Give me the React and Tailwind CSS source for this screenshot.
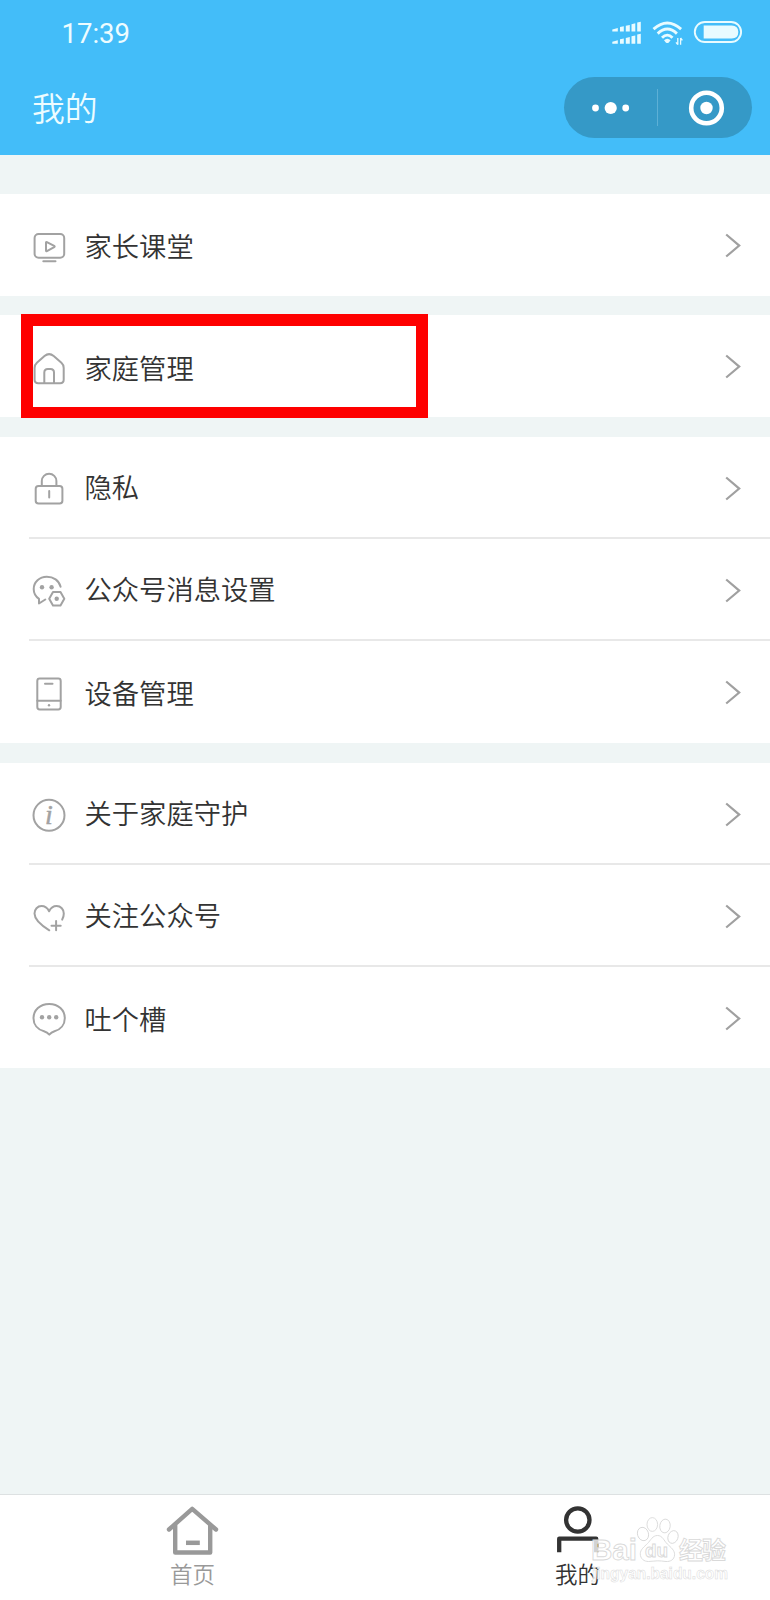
import React from "react";

const icons = {
  video: (
    <>
      <rect x="3.6" y="7" width="29.6" height="23.800" rx="4" />
      <path d="M12.300 34.200H24.500M15 16v7.600q0 1 .9.500l7.300-4q1-.6 0-1.200l-7.300-3.800q-.9-.4-.9.600z" />
    </>
  ),
  house: (
    <>
      <path d="M3.600 20q0-3.200 2.300-5.200L13.500 8q4.600-3.800 9.200 0l7.700 6.800q2.300 2 2.300 5.200V31.800q0 3.400-3.600 3.400H7.200q-3.600 0-3.600-3.400z" />
      <path d="M13.300 35V24.500q0-3.500 3.500-3.500h2.700q3.500 0 3.500 3.500V35" />
    </>
  ),
  lock: (
    <>
      <rect x="4.700" y="16" width="26.700" height="17.500" rx="2.800" />
      <path d="M10.800 16V11a7.300 7.300 0 0 1 14.600 0v5M18.200 21v6.500" />
    </>
  ),
  message: (
    <>
      <path d="M29.600 14.800C28 8.500 22.500 4.700 15.800 4.700 8.500 4.700 2.700 10 2.700 17c0 4.200 2 7.600 5.300 9.900v4.600l6.300-4" />
      <path d="M18.200 26.700l3.800-6.800h7.500l3.800 6.800-3.800 6.800H22z" />
      <g fill="currentColor" stroke="none">
        <circle cx="11" cy="15.200" r="2.200" />
        <circle cx="20.600" cy="15.200" r="2.200" />
        <circle cx="25.700" cy="26.700" r="2.200" />
      </g>
    </>
  ),
  device: (
    <>
      <rect x="6.300" y="4.500" width="23.400" height="31" rx="2.400" />
      <path d="M6.300 26.800h23.400M14 9.700h7.500" />
      <circle cx="18" cy="31.200" r="1.200" fill="currentColor" stroke="none" />
    </>
  ),
  info: (
    <>
      <circle cx="18" cy="19.300" r="15.500" />
      <text x="17.800" y="28" textAnchor="middle" fill="currentColor" stroke="currentColor" strokeWidth="0.500" className="font-['Liberation_Serif',serif] text-[28px] italic">i</text>
    </>
  ),
  heart: (
    <path d="M18.300 32.300C12 28.500 3.500 22.500 3.500 15.600c0-4.200 3-7.500 7-7.500 3.400 0 6 2 7.600 5.200 1.600-3.200 4.200-5.200 7.500-5.200 4.200 0 7.200 3.300 7.200 7.300 0 2.300-.6 4.400-1.600 6.200M20.500 27.700h9.200M25.100 23v9.300" />
  ),
  comment: (
    <>
      <path d="M13 31.200C6.500 29.500 2.500 24.500 2.500 18.200 2.500 10 9 3.900 18.200 3.900S33.800 10 33.800 18.200c0 6.300-4 11.300-10.300 13-2.200.7-3.700 1.600-5.200 3.400-1.500-1.800-3-2.700-5.300-3.400z" />
      <g fill="currentColor" stroke="none">
        <circle cx="11" cy="17.300" r="2.200" />
        <circle cx="18.200" cy="17.300" r="2.200" />
        <circle cx="25.200" cy="17.300" r="2.200" />
      </g>
    </>
  ),
};

const sections = [
  { box: "h-[102px]", items: [{ icon: "video", label: "家长课堂", pad: "pt-[30.500px]" }] },
  { box: "mt-[19px] h-[102px]", marked: true, items: [{ icon: "house", label: "家庭管理", pad: "pt-[31.500px]" }] },
  {
    box: "mt-5 h-[306px]",
    items: [
      { icon: "lock", label: "隐私", pad: "pt-[28.500px]" },
      { icon: "message", label: "公众号消息设置", pad: "pt-[28.500px]" },
      { icon: "device", label: "设备管理", pad: "pt-[30.500px]" },
    ],
  },
  {
    box: "mt-5 h-[305px]",
    items: [
      { icon: "info", label: "关于家庭守护", pad: "pt-[28.500px]" },
      { icon: "heart", label: "关注公众号", pad: "pt-[28.500px]" },
      { icon: "comment", label: "吐个槽", pad: "pt-[30.500px]" },
    ],
  },
];

function Row({ item, last }) {
  return (
    <div className="h-[102px] pl-[29px]">
      <div className={`flex h-full items-start pl-[2px] ${last ? "" : "border-b-2 border-[#e8e8e8]"}`}>
        <svg className="mt-[33px] h-9 w-9 shrink-0 overflow-visible text-[#a2a2a2]" viewBox="0 0 36 36" fill="none" stroke="currentColor" strokeWidth="2" strokeLinecap="round" strokeLinejoin="round">
          {icons[item.icon]}
        </svg>
        <span className={`ml-[17.500px] grow text-[27.300px] leading-[40px] font-[350] text-[#333] ${item.pad}`}>{item.label}</span>
        <svg className="mt-[38px] mr-[28px] h-[27px] w-[18px] shrink-0" viewBox="0 0 18 27" fill="none" stroke="#a0a0a0" strokeWidth="2.200">
          <path d="M2.200 2.500L15.200 13.600 2.200 24.500" />
        </svg>
      </div>
    </div>
  );
}

function StatusIcons() {
  return (
    <svg className="h-7 w-[134px]" viewBox="610 18 134 28" fill="#e8fbff">
      <path d="M612.300 29.500l5.500-1.400v3.400h-5.500zM620 27l3.800-.8v5.300H620zM625.800 25.700l4-.8v6.600h-4zM631.500 24.200l3.800-.9v8.200h-3.800zM637.200 22.500l3.600-.8v9.800h-3.600z" />
      <path d="M612.300 41.700l5.500-1.400v3.400h-5.500zM620 39.200l3.800-.8v5.300H620zM625.800 37.900l4-.8v6.600h-4zM631.500 36.300l3.800-.9v8.300h-3.800zM637.200 34.500l3.600-.8v10h-3.600z" />
      <g fill="none" stroke="#e8fbff" strokeWidth="2.900">
        <path d="M653.500 29.200Q667.300 16.800 681.100 29.200M657.700 33.600Q667.300 24.600 676.900 33.600M662 37.800Q667.300 32.500 672.500 37.800" />
        <rect x="694.800" y="22" width="46.300" height="20" rx="10" strokeWidth="1.900" />
      </g>
      <path d="M664 40.300q3.300-3.200 6.600 0l-1.800 2.200q-1.500 1.200-3 0z" />
      <path d="M677.800 38v6.700M680.600 38v6.700M677.800 44.700l-1.800-2.300M680.600 38l1.800 2.300" stroke="#e8fbff" strokeWidth="1.300" fill="none" />
      <path d="M703.700 25.500h28q6.600 0 6.600 6.500t-6.600 6.500h-28z" />
    </svg>
  );
}

function Watermark() {
  return (
    <svg className="pointer-events-none absolute top-[14px] left-[584px] h-[88px] w-[150px]" viewBox="584 1509 150 88" fill="#fff" fillOpacity="0.8" stroke="#d9d9d9" strokeWidth="0.900">
      <ellipse cx="643" cy="1534" rx="5.500" ry="6.800" transform="rotate(-18 643 1534)" />
      <ellipse cx="652.300" cy="1524.500" rx="5.300" ry="6.900" />
      <ellipse cx="665" cy="1526" rx="5.200" ry="6.900" transform="rotate(8 665 1526)" />
      <ellipse cx="673" cy="1537" rx="5" ry="6.500" transform="rotate(20 673 1537)" />
      <path d="M657.500 1535.500c5 0 6.300 5 9.800 8.500 3.500 3.300 7.500 6.300 7.300 10.800-.3 5-4.400 7-8.600 6.700-3.300-.3-5.500-.7-8.500-.7s-5.700.7-9 .7c-4.500 0-8.200-2.700-8.200-7.700 0-4.300 3.900-7 7.200-10.300 3.200-3.200 5-8 10-8z" />
      <g className="font-['Liberation_Sans',sans-serif] font-bold">
        <text x="591" y="1560" textLength="46" lengthAdjust="spacingAndGlyphs" className="text-[30px]">Bai</text>
        <text x="645" y="1557" textLength="23" lengthAdjust="spacingAndGlyphs" className="text-[19px]">du</text>
        <text x="592" y="1578.500" textLength="136" lengthAdjust="spacingAndGlyphs" strokeWidth="0.500" className="text-[16px]">jingyan.baidu.com</text>
      </g>
      <text x="679" y="1558.500" textLength="47" className="font-['Noto_Sans_CJK_SC',sans-serif] text-[24px] font-bold">经验</text>
    </svg>
  );
}

export default function App() {
  return (
    <div className="flex h-[1600px] w-[770px] flex-col overflow-hidden bg-[#eff5f5] font-['Noto_Sans_CJK_SC',sans-serif]">
      <header className="h-[155px] shrink-0 bg-[#43bdf9] text-[#edfcff]">
        <div className="flex h-[66px] items-start justify-between pr-[26px] pl-[61.500px]">
          <span className="mt-[18px] font-['Roboto',sans-serif] text-[27.500px] leading-8">17:39</span>
          <div className="mt-[18px]"><StatusIcons /></div>
        </div>
        <div className="flex items-start justify-between pr-[18.500px] pl-8">
          <h1 className="mt-[17px] text-[32.800px] leading-[48px] font-[350]">我的</h1>
          <div className="mt-[11px] flex h-[61px] w-[187.500px] items-center rounded-full bg-[#3599c7]">
            <svg className="h-4 w-[93px]" viewBox="0 0 93 16" fill="#fff">
              <circle cx="31.500" cy="8" r="3.400" />
              <circle cx="46.700" cy="8" r="6.100" />
              <circle cx="61.700" cy="8" r="3.400" />
            </svg>
            <div className="h-[37px] w-px bg-[#5db0d6]" />
            <svg className="h-9 w-[93px]" viewBox="0 0 93 36">
              <circle cx="48.500" cy="18" r="15.300" fill="none" stroke="#fff" strokeWidth="4.600" />
              <circle cx="48.500" cy="18" r="6.200" fill="#fff" />
            </svg>
          </div>
        </div>
      </header>

      <main className="grow pt-[39px]">
        {sections.map((section) => (
          <section key={section.items[0].label} className={`relative bg-white ${section.box}`}>
            {section.items.map((item, i) => (
              <Row key={item.label} item={item} last={i === section.items.length - 1} />
            ))}
            {section.marked && (
              <div className="absolute top-[-1px] left-[21px] h-[104px] w-[407px] border-[12px] border-t-[12px] border-b-[11px] border-[#fe0000]" />
            )}
          </section>
        ))}
      </main>

      <nav className="relative grid h-[106px] shrink-0 grid-cols-2 border-t border-[#dde1e2] bg-white text-[22.500px] leading-[34px] font-[350]">
        <div className="flex flex-col items-center pt-[9px] text-[#999]">
          <svg className="h-[52px] w-[56px]" viewBox="0 0 56 52" fill="none" stroke="currentColor" strokeWidth="4.400" strokeLinecap="round" strokeLinejoin="round">
            <path d="M4 25.500L27.200 4.800 51 25.500M10.200 21v27.500h35V21" />
            <path d="M21 38.800h13.800" strokeLinecap="butt" strokeWidth="4.500" />
          </svg>
          <span>首页</span>
        </div>
        <div className="flex flex-col items-center pt-[9px] text-[#333]">
          <svg className="h-[52px] w-[56px]" viewBox="0 0 56 52" fill="none" stroke="currentColor" strokeWidth="4.300" strokeLinejoin="round">
            <circle cx="27.800" cy="16" r="11.700" />
            <path d="M9.200 48.300V34.700h37v13.600" />
          </svg>
          <span>我的</span>
        </div>
        <Watermark />
      </nav>
    </div>
  );
}
